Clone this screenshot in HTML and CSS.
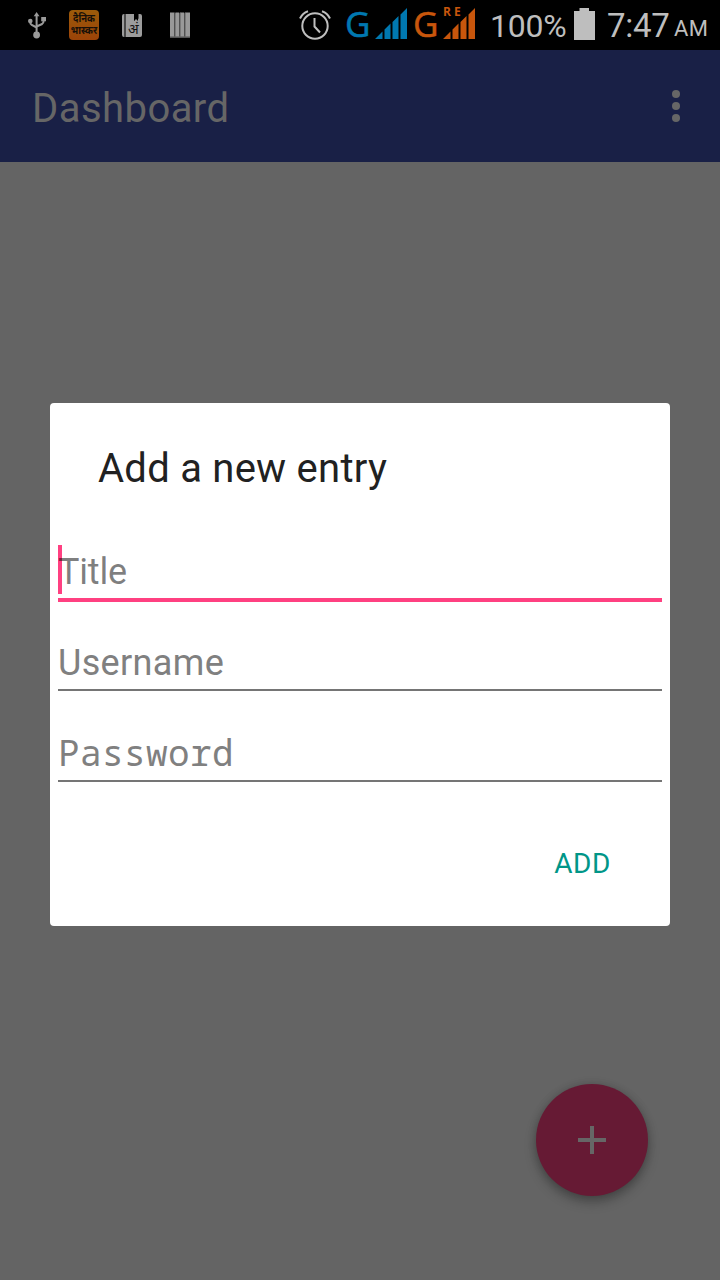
FILE: index.html
```html
<!DOCTYPE html>
<html lang="en">
<head>
<meta charset="utf-8">
<title>Dashboard</title>
<link rel="stylesheet" href="styles.css">
</head>
<body>
<div class="screen">
  <header class="status">
    <svg class="usb" width="19" height="27" viewBox="0 0 19 27" fill="#9a9a9a" stroke="#9a9a9a">
      <path d="M8.600 3v20M2.200 8.500v2q0 1.500 1.500 2.300L8.600 15.500M15.600 6v3q0 2-1.500 3L8.600 14.500" fill="none" stroke-width="2"/>
      <path d="M8.600 0l2.900 4.300H5.700z" stroke="none"/><circle cx="8.600" cy="23" r="3.400" stroke="none"/><circle cx="2.300" cy="9" r="2.300" stroke="none"/><path d="M13.200 5h4.800v4.300h-4.800z" stroke="none"/>
    </svg>
    <div class="news" lang="hi"><span>दैनिक</span><span>भास्कर</span></div>
    <div class="dict">
      <svg width="20" height="24" viewBox="0 0 20 24"><path d="M2 0h10v7l2-2 2 2V0h2q2 0 2 2v19q0 2-2 2H2q-2 0-2-2V2q0-2 2-2z" fill="#9c9c9c"/><path d="M3 0v23" stroke="#111" stroke-width="1.200"/><path d="M12 0h4.500v5l-2-2-2.500 4z" fill="#000"/></svg>
      <span lang="hi">अं</span>
    </div>
    <svg class="bars" width="20" height="26" viewBox="0 0 20 26"><path d="M0 .5h4.500l.5 1 .5-1H9l.5 1 .5-1h4l.5 1 .5-1h5v25H0z" fill="#999"/><path d="M4.800 1v24M9.800 1v24M14.800 1v24" stroke="#333"/><path d="M0 24.800h20" stroke="#666"/></svg>
    <svg class="alarm" width="32" height="30" viewBox="0 0 32 30" fill="none" stroke="#bebebe" stroke-width="2"><circle cx="16" cy="16" r="12.700"/><path d="M15.500 8v8.500l5.500 6M1 8.500Q3.500 3 9 1.200M31 8.500Q28.500 3 23 1.200"/></svg>
    <span class="net blue">G</span>
    <svg class="signal blue" width="32" height="32" viewBox="0 0 32 32" fill="currentColor"><path d="M0 31l7.500-7.500V31zM9.500 21.500l6-6V31h-6zM17.500 14l6-6V31h-6zM25.500 6.500L32 0v31h-6.500z"/></svg>
    <span class="net orange">G</span>
    <div class="roam orange"><span>RE</span>
      <svg width="32" height="32" viewBox="0 0 32 32" fill="currentColor"><path d="M0 31l7.500-7.500V31zM9.500 21.500l6-6V31h-6zM17.500 14l6-6V31h-6zM25.500 6.500L32 0v31h-6.500z"/></svg>
    </div>
    <span class="percent">100%</span>
    <svg class="battery" width="21" height="32" viewBox="0 0 21 32"><path d="M0 3h5.500V0h9.500v3h6v29H0z" fill="#bebebe"/></svg>
    <span class="clock">7:47</span><span class="meridiem">AM</span>
  </header>
  <div class="appbar">
    <h1>Dashboard</h1>
    <svg width="8" height="32" viewBox="0 0 8 32" fill="#666"><circle cx="4" cy="4" r="4"/><circle cx="4" cy="16" r="4"/><circle cx="4" cy="28" r="4"/></svg>
  </div>
  <main>
    <section class="dialog">
      <h2>Add a new entry</h2>
      <div class="field focused"><span>Title</span></div>
      <div class="field username"><span>Username</span></div>
      <div class="field password"><span>Password</span></div>
      <div class="actions"><span>ADD</span></div>
    </section>
    <div class="fab"><svg width="28" height="28" viewBox="0 0 28 28"><path d="M14 0v28M0 14h28" stroke="#666" stroke-width="4"/></svg></div>
  </main>
</div>
</body>
</html>
```
FILE: styles.css
```css
* { box-sizing: border-box; }
body { margin: 0; font-family: Roboto, sans-serif; }
h1, h2 { margin: 0; font-weight: 400; font-size: 40px; line-height: 48px; white-space: nowrap; }
svg { display: block; flex: none; }
.screen { width: 720px; height: 1280px; display: flex; flex-direction: column; background: #646464; overflow: hidden; }

.status { height: 50px; flex: none; display: flex; align-items: flex-start; background: #000; color: #bebebe; white-space: nowrap; }
.status > * { flex: none; }
.usb { margin: 12px 0 0 28px; }
.news { width: 30px; height: 30px; margin: 10px 0 0 22px; padding-top: 3px; border-radius: 4px; background: linear-gradient(#9c5b0a, #9b4308); color: #171008; font: 700 9.500px/12px "Noto Sans", sans-serif; display: flex; flex-direction: column; align-items: center; }
.news span { transform: scaleY(1.15); }
.dict { position: relative; width: 20px; margin: 14px 0 0 23px; }
.dict span { position: absolute; left: 6px; top: 7px; font: 14px/16px "Noto Sans", sans-serif; color: #111; }
.bars { margin: 12px 0 0 28px; }
.alarm { margin: 10px 0 0 109px; }
.blue { color: #0078b0; }
.orange { color: #c8560c; }
.net { width: 30px; font: 35px/48px "Noto Sans", sans-serif; -webkit-text-stroke: .4px currentColor; }
.net.blue { margin: 0 0 0 13px; padding-left: 1px; }
.signal { margin: 8px 0 0 1px; }
.net.orange { margin: 0 0 0 5px; padding-left: 1px; }
.roam { position: relative; margin: 8px 0 0 1px; }
.roam span { position: absolute; left: 0; top: -3px; font: 700 12px/14px "Open Sans", sans-serif; letter-spacing: 3px; }
.percent { width: 84px; margin: 7px 0 0 15px; font-size: 32px; line-height: 38px; letter-spacing: -.2px; }
.battery { margin-top: 8px; }
.clock { width: 67px; margin: 7px 0 0 12px; font-size: 33px; line-height: 38px; letter-spacing: -.3px; }
.meridiem { margin-top: 16px; font-size: 22px; line-height: 26px; letter-spacing: .3px; }

.appbar { height: 112px; flex: none; display: flex; align-items: center; justify-content: space-between; padding: 2px 40px 2px 32px; background: #192046; color: #666; }
.appbar h1 { padding-top: 6px; letter-spacing: .45px; }
main { flex: 1; display: flex; flex-direction: column; justify-content: space-between; padding: 241px 50px 84px; }
.dialog { height: 523px; padding: 42px 8px 0; border-radius: 4px; background: #fff; color: #212121; }
.dialog h2 { padding-left: 40px; letter-spacing: .25px; }
.field { height: 91px; display: flex; align-items: flex-end; padding-bottom: 4px; border-bottom: 2px solid #757575; color: #808080; font-size: 36px; line-height: 44px; }
.field.focused { position: relative; height: 109px; border-bottom: 4px solid #ff4081; letter-spacing: -.2px; }
.field.focused::before { content: ""; position: absolute; left: 0; bottom: 4px; width: 4px; height: 49px; background: #ff4081; }
.field.focused span { position: relative; color: rgba(0,0,0,.5); }
.field.username { height: 89px; letter-spacing: .35px; }
.field.password { padding-bottom: 5px; font-family: "Noto Sans Mono", "DejaVu Sans Mono", monospace; letter-spacing: .4px; }
.actions { display: flex; justify-content: flex-end; padding: 65px 51px 0 0; color: #009688; font-size: 28px; line-height: 34px; letter-spacing: .6px; }
.fab { width: 112px; height: 112px; align-self: flex-end; margin-right: 22px; border-radius: 50%; display: flex; align-items: center; justify-content: center; background: #661a34; box-shadow: 0 6px 12px rgba(0,0,0,.28), 0 0 8px rgba(0,0,0,.15); }
```
